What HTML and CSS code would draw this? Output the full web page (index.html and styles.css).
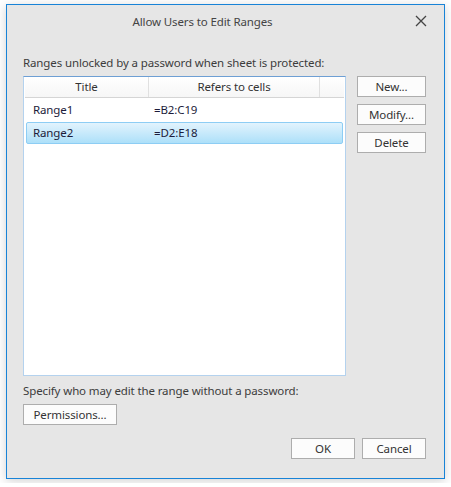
FILE: index.html
```html
<!DOCTYPE html>
<html lang="en">
<head>
  <meta charset="UTF-8">
  <title>Allow Users to Edit Ranges</title>
  <link rel="stylesheet" href="styles.css">
</head>
<body>
  <div class="dialog">
    <div class="titlebar">
      <span class="title">Allow Users to Edit Ranges</span>
      <span class="close">
        <svg width="12" height="12" viewBox="0 0 12 12"><path d="M1 1L11 11M11 1L1 11" stroke="#444" stroke-width="1.3"/></svg>
      </span>
    </div>

    <div class="content">
      <p class="label label-top">Ranges unlocked by a password when sheet is protected:</p>

      <div class="main">
        <div class="list">
          <div class="list-head">
            <div class="col col-title">Title</div>
            <div class="col col-ref">Refers to cells</div>
            <div class="col col-rest"></div>
          </div>
          <div class="row">
            <div class="cell cell-title">Range1</div>
            <div class="cell cell-ref">=B2:C19</div>
          </div>
          <div class="row selected">
            <div class="cell cell-title">Range2</div>
            <div class="cell cell-ref">=D2:E18</div>
          </div>
        </div>

        <div class="side-buttons">
          <button class="btn btn-side">New...</button>
          <button class="btn btn-side">Modify...</button>
          <button class="btn btn-side">Delete</button>
        </div>
      </div>

      <p class="label label-bottom">Specify who may edit the range without a password:</p>
      <button class="btn btn-perm">Permissions...</button>

      <div class="footer">
        <button class="btn btn-foot">OK</button>
        <button class="btn btn-foot">Cancel</button>
      </div>
    </div>
  </div>
</body>
</html>
```

FILE: styles.css
```css
body {
  margin: 0;
  padding: 4px 6px;
  background-color: #ffffff;
  font-family: "Noto Sans", "Open Sans", sans-serif;
  font-size: 11.5px;
  letter-spacing: -0.12px;
  color: #333;
}
.dialog {
  width: 437px;
  height: 473px;
  border: 1px solid #1883d7;
  background-color: #e6e6e6;
  box-shadow: 0 2px 10px rgba(0, 0, 0, 0.18);
}
.titlebar {
  height: 32px;
  display: flex;
  align-items: center;
  justify-content: center;
  padding-right: 46px;
  position: relative;
}
.title {
  color: #444;
}
.close {
  position: absolute;
  right: 17px;
  top: 10px;
  width: 12px;
  height: 12px;
}
.content {
  padding: 18px 18px 0 16px;
}
.label {
  margin: 0;
  line-height: 16px;
  height: 16px;
  color: #3c3c3c;
}
.label-top {
  margin-bottom: 5px;
}
.main {
  display: flex;
  gap: 11px;
}
.list {
  width: 320px;
  height: 298px;
  background-color: #fff;
  border: 1px solid #b4d2ee;
  border-top-color: #6e9fd4;
  padding: 0 1px;
}
.list-head {
  display: flex;
  height: 20px;
  border-bottom: 1px solid #d5d5d5;
  background: linear-gradient(#ffffff, #f6f6f6);
}
.col {
  line-height: 20px;
  text-align: center;
  color: #333;
  border-right: 1px solid #e0e0e0;
}
.col-title {
  width: 123px;
}
.col-ref {
  width: 170px;
}
.col-rest {
  flex: 1;
  border-right: none;
}
.row {
  display: flex;
  height: 20px;
  margin: 1px 1px 0;
  border: 1px solid transparent;
  border-radius: 2px;
}
.row.selected {
  background: linear-gradient(#e2f3fd, #ade0f9);
  border-color: #8dcdf4;
}
.cell {
  line-height: 20px;
  color: #1c1c3a;
}
.cell-title {
  width: 121px;
  padding-left: 6px;
}
.cell-ref {
  padding-left: 0;
}
.side-buttons {
  display: flex;
  flex-direction: column;
  gap: 7px;
}
.btn {
  font-family: inherit;
  font-size: 11.5px;
  letter-spacing: -0.12px;
  color: #333;
  height: 21px;
  padding: 0;
  border: 1px solid #adadad;
  background-color: #fcfcfc;
  border-radius: 0;
}
.btn-side {
  width: 69px;
}
.label-bottom {
  margin-top: 7px;
  margin-bottom: 5px;
}
.btn-perm {
  width: 94px;
  display: block;
}
.footer {
  display: flex;
  justify-content: flex-end;
  gap: 7px;
  margin-top: 13px;
}
.btn-foot {
  width: 64px;
}
```
